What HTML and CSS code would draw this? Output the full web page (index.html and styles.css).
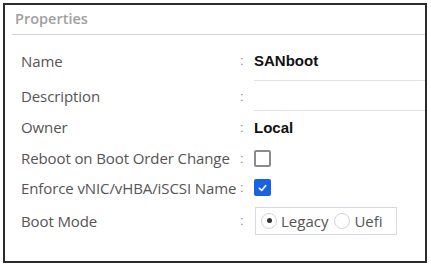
FILE: index.html
```html
<!DOCTYPE html>
<html>
<head>
<meta charset="utf-8">
<link rel="stylesheet" href="styles.css">
</head>
<body>
<div class="panel">
  <div class="header">Properties</div>
  <div class="rows">
    <div class="row r-name">
      <div class="label">Name</div>
      <div class="colon">:</div>
      <div class="value input"><span class="strong">SANboot</span></div>
    </div>
    <div class="row r-desc">
      <div class="label">Description</div>
      <div class="colon">:</div>
      <div class="value input"></div>
    </div>
    <div class="row r-owner">
      <div class="label">Owner</div>
      <div class="colon">:</div>
      <div class="value"><span class="strong">Local</span></div>
    </div>
    <div class="row r-reboot">
      <div class="label">Reboot on Boot Order Change</div>
      <div class="colon">:</div>
      <div class="value"><span class="checkbox"></span></div>
    </div>
    <div class="row r-enforce">
      <div class="label">Enforce vNIC/vHBA/iSCSI Name</div>
      <div class="colon">:</div>
      <div class="value"><span class="checkbox checked"><svg viewBox="0 0 16 16" width="16" height="16"><path d="M4 8.3 L7 11 L12 5" fill="none" stroke="#fff" stroke-width="2" stroke-linecap="round" stroke-linejoin="round"/></svg></span></div>
    </div>
    <div class="row r-boot">
      <div class="label">Boot Mode</div>
      <div class="colon">:</div>
      <div class="value">
        <div class="radiogroup">
          <span class="radio on"></span><span class="rlabel">Legacy</span>
          <span class="radio"></span><span class="rlabel">Uefi</span>
        </div>
      </div>
    </div>
  </div>
</div>
</body>
</html>
```

FILE: styles.css
```css
html, body {
  margin: 0;
  padding: 0;
  background: #fff;
}
body {
  font-family: "Liberation Sans", Arial, sans-serif;
}
.panel {
  margin: 3px 0 0 3px;
  width: 420px;
  height: 256px;
  border: 2px solid #2b2b2b;
  background: #fff;
}
.header {
  margin-left: 7px;
  height: 29px;
  padding-left: 3px;
  border-bottom: 1px solid #d4d4d8;
  color: #a0a0a0;
  font-family: "Open Sans", sans-serif;
  font-weight: 600;
  font-size: 14.5px;
  line-height: 27px;
}
.rows {
  padding-top: 9px;
  padding-left: 16px;
}
.row {
  display: grid;
  grid-template-columns: 219px 14px 1fr;
  align-items: center;
}
.label {
  color: #555;
  font-size: 15px;
  font-family: "Open Sans", sans-serif;
  letter-spacing: -0.1px;
  white-space: nowrap;
}
.colon {
  color: #888;
  font-size: 13px;
}
.value {
  height: 100%;
  display: flex;
  align-items: center;
}
.strong {
  font-weight: bold;
  font-size: 15px;
  color: #111;
}
.input {
  border-bottom: 1px solid #e0e0ee;
  box-sizing: border-box;
}
.r-name { height: 37px; }
.r-name .label, .r-name .colon { padding-bottom: 4px; }
.r-name .value { padding-bottom: 4px; }
.r-desc { height: 30px; }
.r-owner { height: 32px; }
.r-reboot { height: 30px; }
.r-enforce { height: 29px; }
.r-boot { height: 37px; }
.checkbox {
  width: 13px;
  height: 13px;
  border: 2px solid #8a8a94;
  border-radius: 2px;
  display: inline-flex;
  align-items: center;
  justify-content: center;
}
.checkbox.checked {
  background: #1a62e4;
  border-color: #1a62e4;
}
.checkbox svg { display: block; }
.radiogroup {
  display: flex;
  align-items: center;
  width: 142px;
  height: 28px;
  border: 1px solid #d6d8ea;
  box-sizing: border-box;
  padding-left: 5px;
  margin-left: 1px;
  font-family: "Open Sans", sans-serif;
  font-size: 15px;
  color: #555;
}
.radio {
  width: 14px;
  height: 14px;
  border: 1px solid #d0d2e4;
  border-radius: 50%;
  position: relative;
  margin-right: 4px;
}
.radio.on::after {
  content: "";
  position: absolute;
  left: 4.5px;
  top: 4.5px;
  width: 5px;
  height: 5px;
  border-radius: 50%;
  background: #333;
}
.rlabel { margin-right: 6px; }
```
